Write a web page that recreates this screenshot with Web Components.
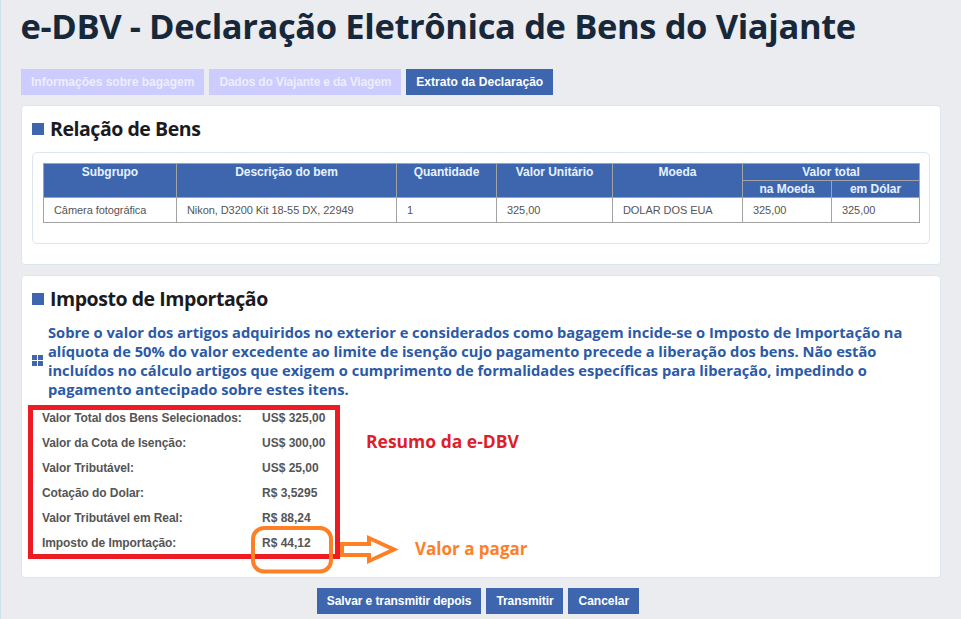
<!DOCTYPE html>
<html lang="pt"><head><meta charset="utf-8"><title>e-DBV</title>
<style>
html,body{margin:0;height:619px;overflow:hidden}
body{background:#eaecef;font-family:"Liberation Sans",Arial,sans-serif}
</style></head><body>
<dbv-app></dbv-app>
<script>
function def(name,html){customElements.define(name,class extends HTMLElement{constructor(){super();this.attachShadow({mode:'open'}).innerHTML=html;}});}
def('dbv-tab',`<style>:host{display:block;height:26px;padding:0 10px;background:#ccf;color:#eeeefc;font:bold 12px/26px "Liberation Sans",sans-serif}
:host([active]){background:#3e66ae;color:#fff}</style><slot></slot>`);
def('dbv-button',`<style>:host{display:block;height:26px;padding:0 10px;background:#3e66ae;color:#fff;font:bold 12px/26px "Liberation Sans",sans-serif}</style><slot></slot>`);
def('dbv-panel',`<style>:host{display:block;position:relative;box-sizing:border-box;width:920px;background:#fff;border:1px solid #dbe6ef;border-radius:4px;padding:0 10px}
h2{margin:0;display:flex;align-items:center;gap:6px;height:46px;font:700 19.5px/46px "Open Sans",sans-serif;color:#1b1b1f;letter-spacing:-.45px}
i{width:12px;height:12px;background:#3e66ae;display:block}</style><h2><i></i><slot name="t"></slot></h2><slot></slot>`);
def('dbv-goods',`<style>:host{display:block;box-sizing:border-box;width:898px;height:92px;border:1px solid #dbe6ef;border-radius:5px;padding:10px}
table{border-collapse:collapse;table-layout:fixed;width:877px;font:12px "Liberation Sans",sans-serif;color:#555}
th,td{border:1px solid #a3a3a3;padding:0}
th{background:#3e66ae;color:#e6f2ff;font:bold 12px/16px "Liberation Sans",sans-serif;vertical-align:top;height:16px;text-align:center;letter-spacing:-.04px}
td{height:24px;padding-left:10px;font-size:11px;letter-spacing:-.07px}
</style><table><colgroup><col style="width:133px"><col style="width:220px"><col style="width:100px"><col style="width:116px"><col style="width:130px"><col style="width:89px"><col style="width:88px"></colgroup>
<thead><tr><th rowspan="2">Subgrupo</th><th rowspan="2">Descrição do bem</th><th rowspan="2">Quantidade</th><th rowspan="2">Valor Unitário</th><th rowspan="2">Moeda</th><th colspan="2">Valor total</th></tr>
<tr><th>na Moeda</th><th>em Dólar</th></tr></thead>
<tbody><tr><td>Câmera fotográfica</td><td>Nikon, D3200 Kit 18-55 DX, 22949</td><td>1</td><td>325,00</td><td>DOLAR DOS EUA</td><td>325,00</td><td>325,00</td></tr></tbody></table>`);
def('dbv-notice',`<style>:host{display:flex;align-items:center;gap:5px;width:900px;margin-top:1px}
svg{flex:none;width:11px;height:11px;margin-top:-1px}
p{margin:0;font:700 14.68px/19px "Open Sans",sans-serif;color:#2b5aa6}</style>
<svg viewBox="0 0 11 11" fill="#3e66ae"><rect width="5" height="5"/><rect x="6" width="5" height="5"/><rect y="6" width="5" height="5"/><rect x="6" y="6" width="5" height="5"/></svg><p><slot></slot></p>`);
def('dbv-summary',`<style>:host{display:grid;grid-template-columns:220px auto;justify-content:start;grid-auto-rows:25px;align-items:center;margin:7px 0 0 10px;font:bold 12px/25px "Liberation Sans",sans-serif;color:#555}
::slotted(:nth-child(odd)){letter-spacing:-.08px}</style><slot></slot>`);
def('dbv-app',`<style>:host{display:block;box-sizing:border-box;height:619px;border-left:1px solid #cfe0ee;padding:0 0 0 20px}
h1{margin:0;height:69px;font:700 34.5px/52px "Open Sans",sans-serif;color:#17283a;letter-spacing:-.38px;white-space:nowrap;text-indent:-.5px}
nav{display:flex;gap:5px;margin-bottom:10px}
footer{display:flex;justify-content:center;gap:5px;margin-top:10px;width:960px;margin-left:-21px;padding-right:4px;box-sizing:border-box}
.gap{height:10px}
.ann{position:absolute;font:700 17.5px/22px "Open Sans",sans-serif;white-space:nowrap}
svg.a{position:absolute;overflow:visible;left:0;top:0;pointer-events:none}
</style>
<h1>e-DBV - Declaração Eletrônica de Bens do Viajante</h1>
<nav><dbv-tab>Informações sobre bagagem</dbv-tab><dbv-tab style="letter-spacing:-.18px">Dados do Viajante e da Viagem</dbv-tab><dbv-tab active style="letter-spacing:.05px">Extrato da Declaração</dbv-tab></nav>
<dbv-panel style="height:160px"><span slot="t">Relação de Bens</span><dbv-goods></dbv-goods></dbv-panel>
<div class="gap"></div>
<dbv-panel style="height:303px"><span slot="t">Imposto de Importação</span>
<dbv-notice>Sobre o valor dos artigos adquiridos no exterior e considerados como bagagem incide-se o Imposto de Importação na alíquota de 50% do valor excedente ao limite de isenção cujo pagamento precede a liberação dos bens. Não estão incluídos no cálculo artigos que exigem o cumprimento de formalidades específicas para liberação, impedindo o pagamento antecipado sobre estes itens.</dbv-notice>
<dbv-summary><span>Valor Total dos Bens Selecionados:</span><span>US$ 325,00</span><span>Valor da Cota de Isenção:</span><span>US$ 300,00</span><span>Valor Tributável:</span><span>US$ 25,00</span><span>Cotação do Dolar:</span><span>R$ 3,5295</span><span>Valor Tributável em Real:</span><span>R$ 88,24</span><span>Imposto de Importação:</span><span>R$ 44,12</span></dbv-summary>
<svg class="a" width="920" height="303" viewBox="21 275 920 303" style="left:-1px;top:-1px">
<rect x="30.5" y="407.5" width="307" height="149" fill="none" stroke="#ed1c24" stroke-width="5"/>
<rect x="253" y="528" width="78" height="43.5" rx="11" fill="none" stroke="#ff7f27" stroke-width="4"/>
<path d="M342 544H369V538L394 549.5L369 561V555H342Z" fill="none" stroke="#ff7f27" stroke-width="4"/></svg>
<span class="ann" style="left:344px;top:154px;color:#dd1f2b">Resumo da e-DBV</span>
<span class="ann" style="left:393px;top:262px;color:#ff7f27;font-size:17px">Valor a pagar</span>
</dbv-panel>
<footer><dbv-button style="letter-spacing:-.08px">Salvar e transmitir depois</dbv-button><dbv-button style="letter-spacing:-.1px">Transmitir</dbv-button><dbv-button>Cancelar</dbv-button></footer>`);
</script></body></html>
